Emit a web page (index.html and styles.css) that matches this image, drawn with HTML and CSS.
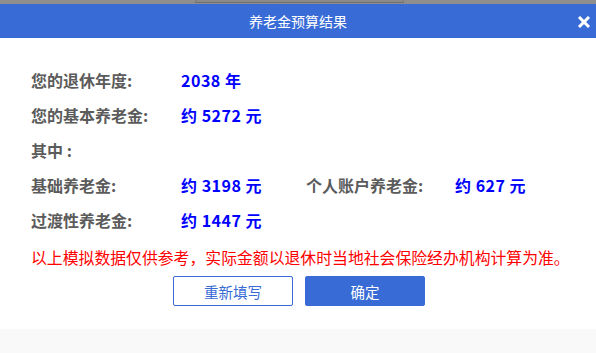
FILE: index.html
```html
<!DOCTYPE html>
<html lang="zh-CN">
<head>
<meta charset="utf-8">
<title>养老金预算结果</title>
<link rel="stylesheet" href="styles.css">
</head>
<body>
<div class="topstrip"><div class="tab"></div></div>
<div class="dialog">
  <div class="header">
    <span class="title">养老金预算结果</span>
    <svg class="close" width="14" height="12" viewBox="0 0 14 12" aria-label="关闭">
      <path d="M2 1 L12 11 M12 1 L2 11" stroke="#ffffff" stroke-width="3" stroke-linecap="butt" fill="none"/>
    </svg>
  </div>
  <div class="content">
    <div class="row"><span class="label">您的退休年度:</span><span class="value">2038 年</span></div>
    <div class="row"><span class="label">您的基本养老金:</span><span class="value">约 5272 元</span></div>
    <div class="row"><span class="label">其中&nbsp;:</span></div>
    <div class="row">
      <span class="label">基础养老金:</span><span class="value short">约 3198 元</span>
      <span class="label">个人账户养老金:</span><span class="value">约 627 元</span>
    </div>
    <div class="row"><span class="label">过渡性养老金:</span><span class="value">约 1447 元</span></div>
    <p class="notice">以上模拟数据仅供参考，实际金额以退休时当地社会保险经办机构计算为准。</p>
    <div class="buttons">
      <button class="btn btn-outline">重新填写</button>
      <button class="btn btn-primary">确定</button>
    </div>
  </div>
  <div class="footer"></div>
</div>
</body>
</html>
```

FILE: styles.css
```css
html, body {
  margin: 0;
  padding: 0;
}
body {
  width: 596px;
  height: 353px;
  overflow: hidden;
  background: #ffffff;
  font-family: "Noto Sans CJK SC", "Noto Sans", sans-serif;
  display: flex;
  flex-direction: column;
}
.topstrip {
  height: 4px;
  background: #8e8e8e;
}
.tab {
  margin-left: 195px;
  width: 209px;
  height: 3px;
  border-left: 1px solid #7a7a7a;
  border-right: 1px solid #7a7a7a;
  border-bottom: 1px solid #6f6f6f;
  box-sizing: border-box;
  background: #8a8a8a;
}
.dialog {
  flex: 1;
  display: flex;
  flex-direction: column;
}
.header {
  height: 34px;
  background: #386bd6;
  color: #ffffff;
  display: flex;
  align-items: center;
  justify-content: center;
  position: relative;
}
.title {
  font-size: 14px;
  line-height: 1;
}
.close {
  position: absolute;
  right: 5px;
  top: 12px;
}
.content {
  padding: 24px 0 0 31px;
  flex: 1;
}
.row {
  display: flex;
  height: 35px;
  align-items: center;
  font-size: 16px;
  font-weight: bold;
}
.label {
  color: #5b5b5b;
  width: 150px;
  white-space: nowrap;
}
.value {
  color: #0000ff;
  white-space: nowrap;
  letter-spacing: 0.5px;
}
.value.short {
  width: 125px;
}
.row .label + .value + .label {
  width: 149px;
}
.notice {
  margin: 11px 0 0 0;
  color: #ff0000;
  font-size: 15.85px;
  line-height: 20px;
  white-space: nowrap;
}
.buttons {
  display: flex;
  gap: 12px;
  margin: 8px 0 0 142px;
}
.btn {
  width: 120px;
  height: 30px;
  box-sizing: border-box;
  border-radius: 2px;
  font-family: "Noto Sans CJK SC", sans-serif;
  font-size: 14.5px;
  padding: 0;
}
.btn-outline {
  background: #ffffff;
  border: 1px solid #386bd6;
  color: #386bd6;
}
.btn-primary {
  background: #386bd6;
  border: 1px solid #386bd6;
  color: #ffffff;
}
.footer {
  height: 24px;
  background: #f9f9f9;
}
```
